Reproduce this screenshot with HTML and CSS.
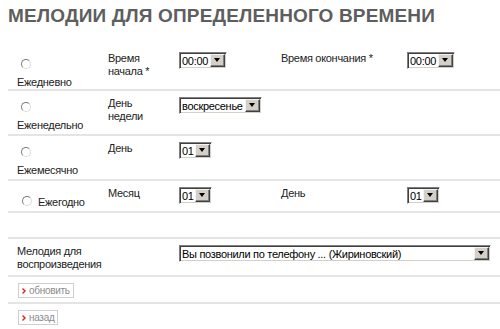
FILE: index.html
```html
<!DOCTYPE html>
<html lang="ru">
<head>
  <meta charset="UTF-8">
  <title>Мелодии для определенного времени</title>
  <link rel="stylesheet" href="styles.css">
</head>
<body>
  <h1 class="title">МЕЛОДИИ ДЛЯ ОПРЕДЕЛЕННОГО ВРЕМЕНИ</h1>
  <table class="schedule">
    <colgroup>
      <col class="col-period">
      <col class="col-label">
      <col class="col-field">
      <col class="col-label2">
      <col class="col-field2">
    </colgroup>
    <tbody>
      <tr class="row-tall first">
        <td>
          <span class="radio"></span>
          <span class="period">Ежедневно</span>
        </td>
        <td>Время<br>начала *</td>
        <td>
          <span class="select w-time"><span class="value">00:00</span><span class="arrow"></span></span>
        </td>
        <td>Время окончания *</td>
        <td>
          <span class="select w-time"><span class="value">00:00</span><span class="arrow"></span></span>
        </td>
      </tr>
      <tr class="row-tall">
        <td>
          <span class="radio"></span>
          <span class="period">Еженедельно</span>
        </td>
        <td>День<br>недели</td>
        <td>
          <span class="select w-day"><span class="value">воскресенье</span><span class="arrow"></span></span>
        </td>
        <td></td>
        <td></td>
      </tr>
      <tr class="row-tall">
        <td>
          <span class="radio"></span>
          <span class="period">Ежемесячно</span>
        </td>
        <td>День</td>
        <td>
          <span class="select w-num"><span class="value">01</span><span class="arrow"></span></span>
        </td>
        <td></td>
        <td></td>
      </tr>
      <tr class="row-year">
        <td>
          <span class="radio inline"></span><span class="period inline">Ежегодно</span>
        </td>
        <td>Месяц</td>
        <td>
          <span class="select w-num"><span class="value">01</span><span class="arrow"></span></span>
        </td>
        <td>День</td>
        <td>
          <span class="select w-num"><span class="value">01</span><span class="arrow"></span></span>
        </td>
      </tr>
      <tr class="row-empty">
        <td colspan="5"></td>
      </tr>
      <tr class="row-melody">
        <td colspan="2">Мелодия для<br>воспроизведения</td>
        <td colspan="3">
          <span class="select w-melody"><span class="value">Вы позвонили по телефону ... (Жириновский)</span><span class="arrow"></span></span>
        </td>
      </tr>
      <tr class="row-button">
        <td colspan="5">
          <a class="button" href="#"><svg width="4" height="6" viewBox="0 0 4 6"><path d="M0.5 0.5 L3 3 L0.5 5.5" fill="none" stroke="#e02020" stroke-width="1.4"/></svg>обновить</a>
        </td>
      </tr>
      <tr class="row-button last">
        <td colspan="5">
          <a class="button" href="#"><svg width="4" height="6" viewBox="0 0 4 6"><path d="M0.5 0.5 L3 3 L0.5 5.5" fill="none" stroke="#e02020" stroke-width="1.4"/></svg>назад</a>
        </td>
      </tr>
    </tbody>
  </table>
</body>
</html>
```

FILE: styles.css
```css
* {
  box-sizing: border-box;
}

body {
  margin: 0;
  background-color: #fff;
  color: #222;
  font-family: "Liberation Sans", Arial, sans-serif;
  font-size: 11px;
  line-height: 13px;
  letter-spacing: -0.3px;
}

.title {
  margin: 4px 0 0 8px;
  font-size: 19px;
  line-height: 24px;
  font-weight: bold;
  letter-spacing: 0.15px;
  color: #5e5e5e;
}

.schedule {
  margin: 18px 0 0 8px;
  width: 492px;
  border-collapse: collapse;
  table-layout: fixed;
}

.col-period { width: 91px; }
.col-label { width: 71px; }
.col-field { width: 102px; }
.col-label2 { width: 126px; }

.schedule td {
  padding: 6px 9px 0;
  vertical-align: top;
  border-bottom: 2px solid #e4e4e4;
}

.row-tall td { height: 45px; }
.row-tall.first td { height: 44px; padding-top: 6px; }
.row-year td { height: 32px; }
.row-empty td { height: 26px; }
.row-melody td { height: 38px; padding-top: 6px; }
.row-button td { height: 27px; padding-top: 6px; padding-left: 10px; }
.row-button.last td { border-bottom: none; }

/* radio */
.radio {
  display: block;
  width: 10px;
  height: 10px;
  margin: 5px 0 7px 4px;
  border-radius: 50%;
  border: 1px solid;
  border-color: #7a7a7a #dcdcdc #dcdcdc #7a7a7a;
  background-color: #fff;
}

.row-tall.first .radio {
  margin-top: 7px;
  margin-bottom: 7px;
}

.radio.inline {
  display: inline-block;
  vertical-align: top;
  margin: 9px 6px 0 5px;
}

.period.inline {
  display: inline-block;
  margin-top: 9px;
}

/* select box */
.select {
  display: inline-flex;
  height: 17px;
  border: 1px solid;
  border-color: #808080 #fff #fff #808080;
  box-shadow: inset 1px 1px 0 #404040, inset -1px -1px 0 #d4d0c8;
  background-color: #fff;
  padding: 1px;
  font-size: 11px;
  line-height: 13px;
  color: #000;
}

.select .value {
  flex: 1;
  padding: 1px 0 0 1px;
  white-space: nowrap;
  overflow: hidden;
}

.select .arrow {
  display: flex;
  align-items: center;
  justify-content: center;
  flex: none;
  width: 15px;
  height: 13px;
  background-color: #d4d0c8;
  border: 1px solid;
  border-color: #f4f4f4 #404040 #404040 #f4f4f4;
  box-shadow: inset -1px -1px 0 #808080;
}

.select .arrow::after {
  content: "";
  border-left: 3px solid transparent;
  border-right: 3px solid transparent;
  border-top: 4px solid #000;
  margin: 0 1px 1px 0;
}

.w-time { width: 48px; }
.w-day { width: 83px; }
.w-num { width: 33px; }
.w-melody { width: 312px; }

/* buttons */
.button {
  display: inline-flex;
  align-items: center;
  gap: 3px;
  height: 15px;
  padding: 0 3px;
  border: 1px solid #cfcfcf;
  color: #8c8c8c;
  font-size: 10px;
  text-decoration: none;
}
```
